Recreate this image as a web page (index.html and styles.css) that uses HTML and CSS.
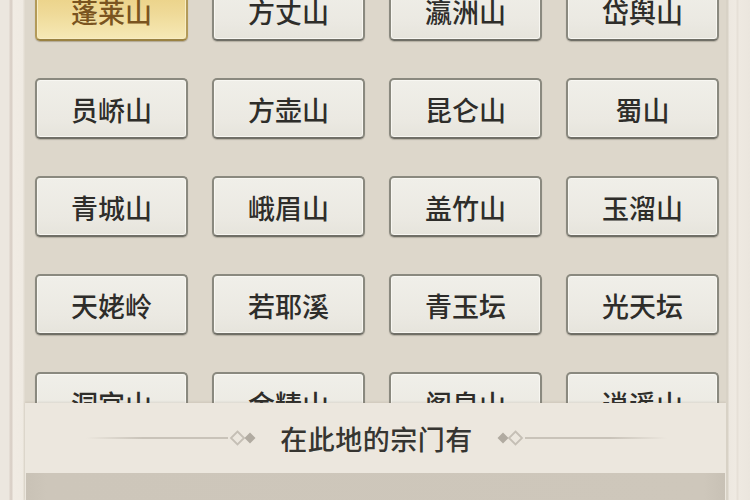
FILE: index.html
```html
<!DOCTYPE html>
<html lang="zh">
<head>
<meta charset="utf-8">
<title>仙山</title>
<link rel="stylesheet" href="styles.css">
</head>
<body>
<div class="frame">
  <div class="edge-left"></div>
  <div class="main">
    <div class="list">
      <div class="grid">
        <div class="btn btn-gold">蓬莱山</div>
        <div class="btn">方丈山</div>
        <div class="btn">瀛洲山</div>
        <div class="btn">岱舆山</div>
        <div class="btn">员峤山</div>
        <div class="btn">方壶山</div>
        <div class="btn">昆仑山</div>
        <div class="btn">蜀山</div>
        <div class="btn">青城山</div>
        <div class="btn">峨眉山</div>
        <div class="btn">盖竹山</div>
        <div class="btn">玉溜山</div>
        <div class="btn">天姥岭</div>
        <div class="btn">若耶溪</div>
        <div class="btn">青玉坛</div>
        <div class="btn">光天坛</div>
        <div class="btn">洞宫山</div>
        <div class="btn">金精山</div>
        <div class="btn">阁皂山</div>
        <div class="btn">逍遥山</div>
      </div>
    </div>
    <div class="panel">
      <div class="title-row">
        <span class="line line-left"></span>
        <svg class="orn" width="28" height="16" viewBox="0 0 28 16">
          <path d="M8.5 1.5 L15 8 L8.5 14.5 L2 8 Z" fill="none" stroke="#c5bfb5" stroke-width="1.8"/>
          <path d="M21 2.5 L26.5 8 L21 13.5 L15.5 8 Z" fill="#b1aba1"/>
        </svg>
        <span class="title">在此地的宗门有</span>
        <svg class="orn" width="28" height="16" viewBox="0 0 28 16">
          <path d="M7 2.5 L12.5 8 L7 13.5 L1.5 8 Z" fill="#b1aba1"/>
          <path d="M19.5 1.5 L26 8 L19.5 14.5 L13 8 Z" fill="none" stroke="#c5bfb5" stroke-width="1.8"/>
        </svg>
        <span class="line line-right"></span>
      </div>
      <div class="sect-box"></div>
    </div>
  </div>
  <div class="edge-right"></div>
</div>
</body>
</html>
```
FILE: styles.css
```css
html, body {
  margin: 0;
  padding: 0;
}
body {
  width: 750px;
  height: 500px;
  overflow: hidden;
  background: #ebe6dd;
  font-family: "Noto Sans CJK SC", "Noto Sans", sans-serif;
}
.frame {
  display: flex;
  width: 750px;
  height: 500px;
}
.edge-left {
  width: 25px;
  flex: none;
  background: linear-gradient(to right,
    #ece7df 0, #ece7df 9px,
    #dcd2c9 10px, #d9d0c7 12px,
    #f1ece4 13px, #efeae2 23px,
    #e2dcd1 24px, #e2dcd1 25px);
}
.edge-right {
  width: 24px;
  flex: none;
  background: linear-gradient(to right,
    #d8d2c6 0, #d8d2c6 2px,
    #ede8e0 3px, #efeae2 10px,
    #e6e0d7 11px, #e6e0d7 12px,
    #eee9e1 13px, #ebe6de 24px);
}
.main {
  width: 701px;
  flex: none;
  display: flex;
  flex-direction: column;
}
.list {
  height: 403px;
  flex: none;
  overflow: hidden;
  background: #ddd7cb;
  padding-left: 10px;
}
.grid {
  margin-top: -20px;
  display: grid;
  grid-template-columns: repeat(4, 153px);
  grid-auto-rows: 61px;
  column-gap: 24px;
  row-gap: 37px;
}
.btn {
  box-sizing: border-box;
  display: flex;
  align-items: center;
  justify-content: center;
  border: 2px solid #8a897f;
  border-bottom-color: #706f67;
  border-radius: 5px;
  background: linear-gradient(#f0efe9, #ebe9e2 70%, #e6e4dc);
  box-shadow: inset 0 0 0 1px #f8f7f2, 0 1px 1px rgba(60, 55, 45, 0.25);
  color: #2e2d2a;
  font-size: 27px;
  font-weight: 500;
  line-height: 1;
  padding-top: 1px;
}
.btn-gold {
  border-color: #b39a58;
  border-bottom-color: #9a8242;
  background: linear-gradient(#e8cc7c, #efda98 55%, #f6e9b6);
  box-shadow: inset 0 0 0 1px #f8edc4, 0 1px 1px rgba(80, 60, 20, 0.3);
  color: #7a5420;
}
.panel {
  height: 97px;
  flex: none;
  display: flex;
  flex-direction: column;
  background: #ece7de;
  box-shadow: 0 -1px 2px rgba(120, 110, 90, 0.15);
}
.title-row {
  height: 70px;
  flex: none;
  display: flex;
  align-items: center;
  justify-content: center;
  padding-left: 2px;
}
.line {
  width: 142px;
  height: 2px;
}
.line-left {
  background: linear-gradient(to right, rgba(200, 194, 184, 0), #c9c3b9 40%, #c9c3b9);
  margin-right: 1px;
}
.line-right {
  background: linear-gradient(to left, rgba(200, 194, 184, 0), #c9c3b9 40%, #c9c3b9);
  margin-left: 1px;
}
.orn {
  display: block;
  flex: none;
}
.title {
  margin: 0 23px;
  font-size: 27px;
  font-weight: 500;
  letter-spacing: 0.5px;
  color: #363531;
  line-height: 1;
}
.sect-box {
  flex: 1;
  margin: 0 1px 0 1px;
  background: linear-gradient(to right, #c9c2b6, #cdc6ba 3%, #cec7bb 97%, #c8c1b5);
}
```
